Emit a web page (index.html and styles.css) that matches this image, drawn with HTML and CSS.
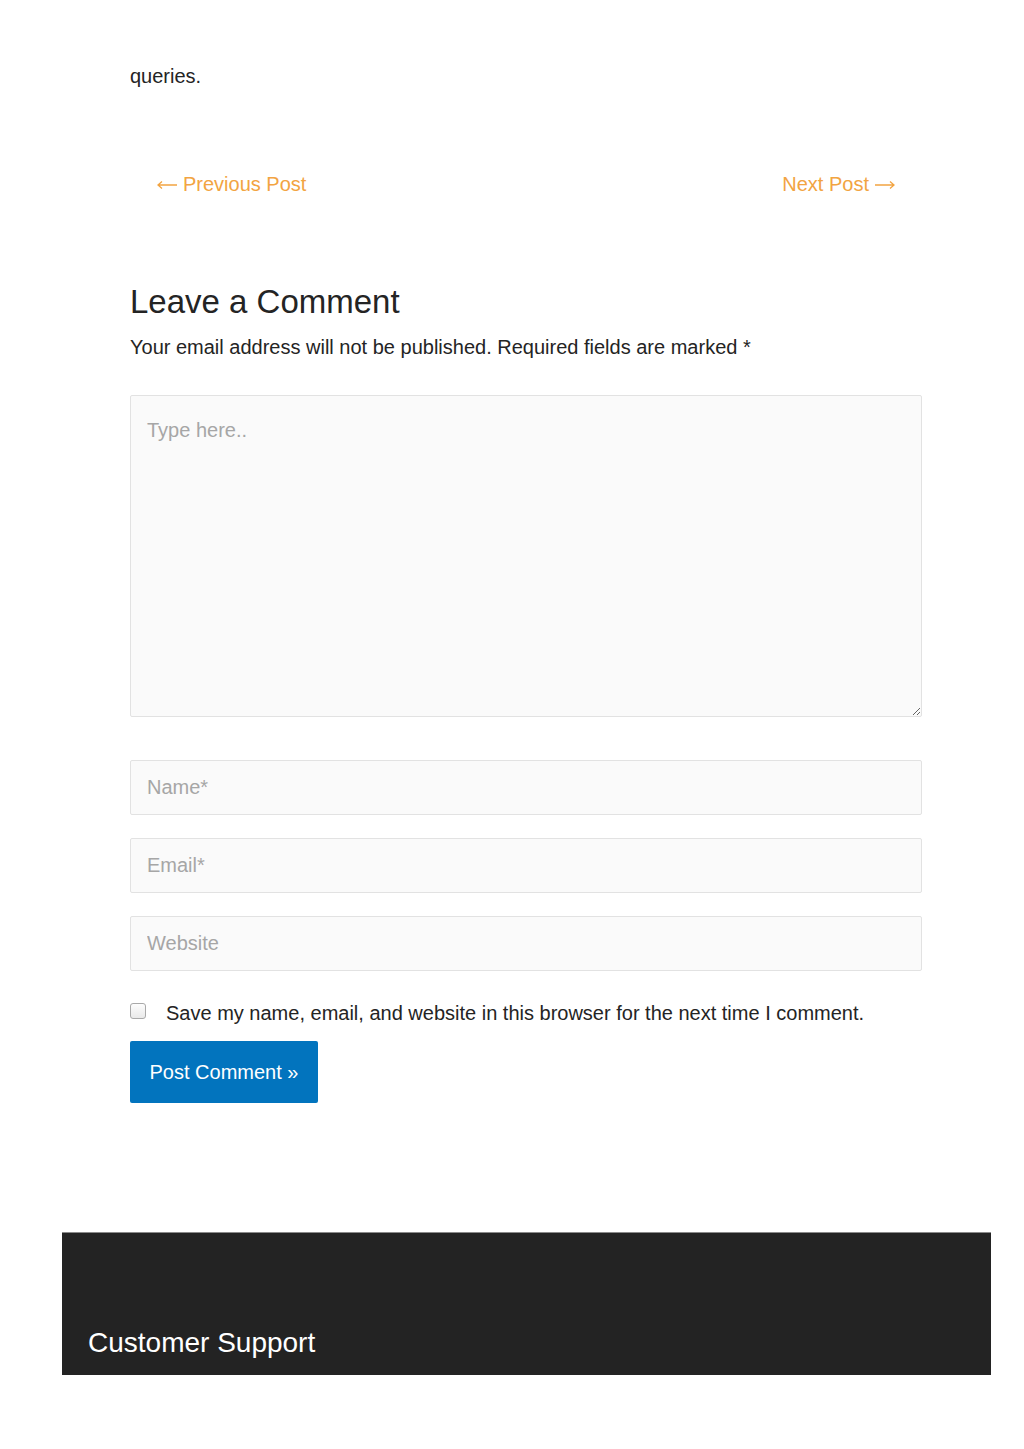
FILE: index.html
```html
<!DOCTYPE html>
<html lang="en">
<head>
  <meta charset="UTF-8">
  <meta name="viewport" content="width=device-width, initial-scale=1.0">
  <title>Leave a Comment</title>
  <link rel="stylesheet" href="styles.css">
</head>
<body>
  <div class="post">
    <p class="post-tail">queries.</p>

    <!-- Navigation entre articles -->
    <nav class="post-nav">
      <a href="#">
        <svg class="arrow" width="20" height="10" viewBox="0 0 20 10"><path d="M20 5H1M5 1.5L1 5L5 8.5"/></svg>
        Previous Post
      </a>
      <a href="#">
        Next Post
        <svg class="arrow" width="20" height="10" viewBox="0 0 20 10"><path d="M0 5H19M15 1.5L19 5L15 8.5"/></svg>
      </a>
    </nav>

    <!-- Formulaire de commentaire -->
    <div class="comments">
      <h3 class="comment-title">Leave a Comment</h3>
      <p class="comment-notes">Your email address will not be published. Required fields are marked *</p>

      <form class="comment-form">
        <textarea class="comment-text" placeholder="Type here.."></textarea>
        <div class="comment-fields">
          <input type="text" placeholder="Name*">
          <input type="email" placeholder="Email*">
          <input type="url" placeholder="Website">
        </div>
        <label class="cookies">
          <input type="checkbox">
          <span>Save my name, email, and website in this browser for the next time I comment.</span>
        </label>
        <button type="button" class="submit">Post Comment &raquo;</button>
      </form>
    </div>
  </div>

  <footer class="site-footer">
    <h2>Customer Support</h2>
  </footer>
</body>
</html>
```

FILE: styles.css
```css
/* Reset */
* {
  margin: 0;
  padding: 0;
  box-sizing: border-box;
}

body {
  font-family: 'Liberation Sans', Arial, Helvetica, sans-serif;
  font-size: 20px;
  line-height: 32px;
  color: #242424;
  background: #fff;
  height: 1449px;
}

/* Article */
.post {
  margin-left: 130px;
  width: 792px;
  padding-top: 60px;
}

/* Précédent / suivant */
.post-nav {
  display: flex;
  justify-content: space-between;
  padding: 0 27px;
  margin-top: 76px;
}

.post-nav a {
  display: flex;
  align-items: center;
  gap: 6px;
  color: #f2a442;
  text-decoration: none;
}

.arrow {
  fill: none;
  stroke: #f2a442;
  stroke-width: 1.3;
  margin-top: 2px;
}

/* Commentaires */
.comments {
  margin-top: 82px;
}

.comment-title {
  font-size: 33px;
  font-weight: normal;
  line-height: 40px;
  color: #242424;
}

.comment-notes {
  margin-top: 9px;
}

.comment-form {
  margin-top: 32px;
  display: flex;
  flex-direction: column;
  align-items: flex-start;
}

.comment-text,
.comment-fields input {
  width: 100%;
  font-family: inherit;
  font-size: 20px;
  color: #555;
  background: #fafafa;
  border: 1px solid #e2e2e2;
  border-radius: 2px;
  outline: none;
}

.comment-text {
  height: 322px;
  line-height: 32px;
  padding: 18px 16px;
}

.comment-text::placeholder,
.comment-fields input::placeholder {
  color: #a6a6a6;
}

.comment-fields {
  width: 100%;
  display: flex;
  flex-direction: column;
  gap: 23px;
  margin-top: 43px;
}

.comment-fields input {
  height: 55px;
  padding: 0 16px;
}

/* Case à cocher */
.cookies {
  display: flex;
  align-items: center;
  gap: 20px;
  margin-top: 26px;
}

.cookies input {
  appearance: none;
  width: 16px;
  height: 16px;
  border: 1px solid #a9a9a9;
  border-radius: 3px;
  background: linear-gradient(#fdfdfd, #e9e9e9);
  margin-top: -4px;
}

.submit {
  margin-top: 12px;
  width: 188px;
  height: 62px;
  font-family: inherit;
  font-size: 20px;
  color: #fff;
  background: #0274be;
  border: none;
  border-radius: 2px;
  cursor: pointer;
}

/* Pied de page */
.site-footer {
  margin: 129px 33px 0 62px;
  height: 143px;
  background: #232323;
  border-top: 1px solid #8a8a8a;
  padding: 90px 0 0 26px;
}

.site-footer h2 {
  font-size: 28px;
  font-weight: normal;
  line-height: 40px;
  color: #fff;
}
```
